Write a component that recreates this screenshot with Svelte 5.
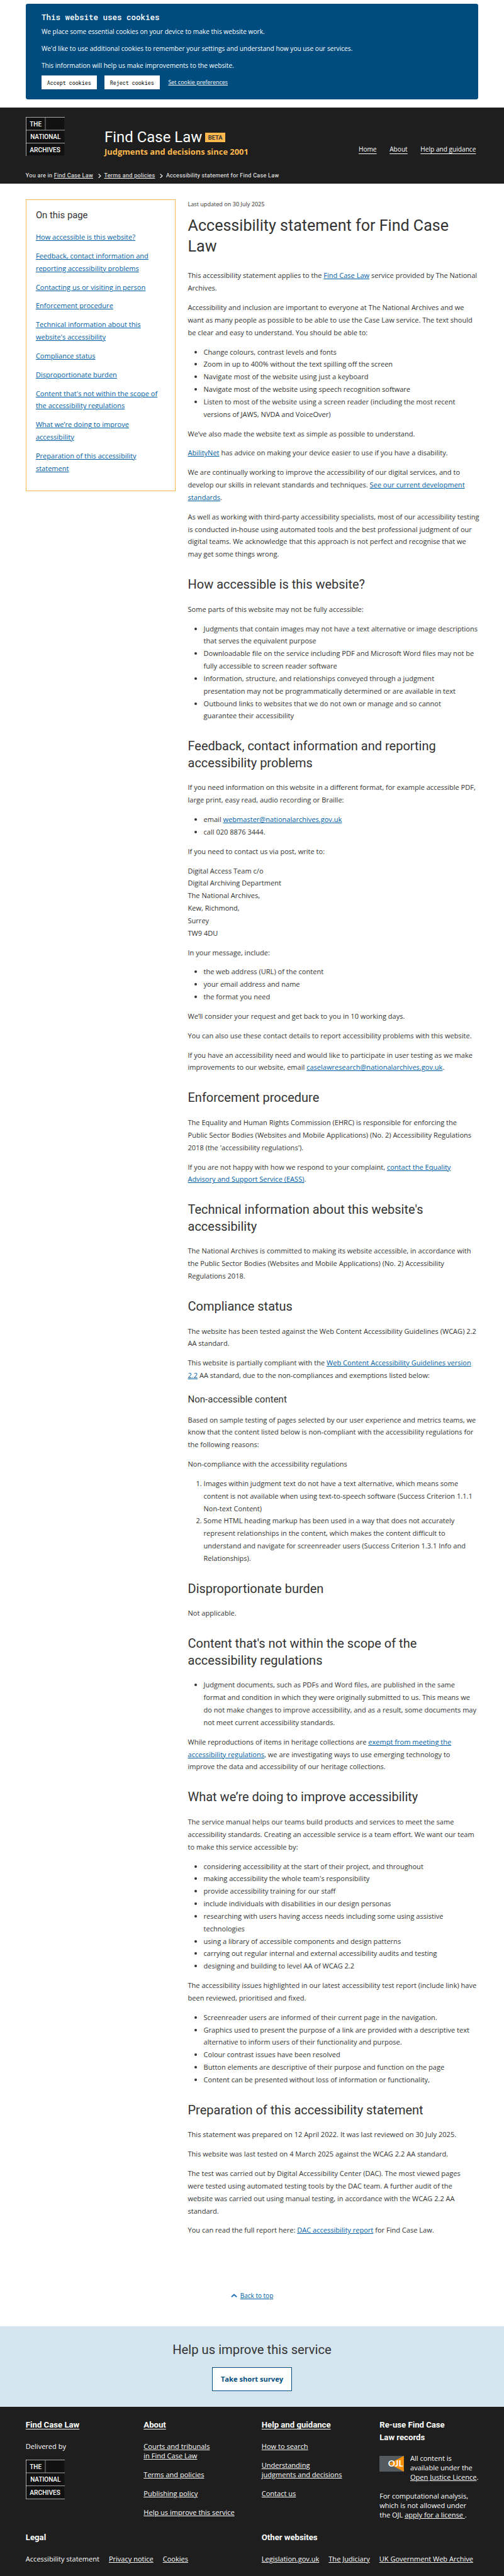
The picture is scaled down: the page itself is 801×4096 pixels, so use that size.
<script>
  const contents = [
    'How accessible is this website?',
    'Feedback, contact information and reporting accessibility problems',
    'Contacting us or visiting in person',
    'Enforcement procedure',
    "Technical information about this website's accessibility",
    'Compliance status',
    'Disproportionate burden',
    "Content that's not within the scope of the accessibility regulations",
    'What we’re doing to improve accessibility',
    'Preparation of this accessibility statement'
  ];
</script>

{#snippet logo()}
  <svg class="logo" viewBox="0 0 100 100" role="img" aria-label="The National Archives">
    <rect x="0.5" y="0.5" width="99" height="99" fill="#111" stroke="#fff" />
    <path d="M0 33.5H100M0 66.5H100" stroke="#fff" />
    <path d="M49.5 1V33" stroke="#999" stroke-width="1.4" />
    <text x="10" y="23.5" textLength="30" lengthAdjust="spacingAndGlyphs">THE</text>
    <text x="11.5" y="56.5" textLength="77" lengthAdjust="spacingAndGlyphs">NATIONAL</text>
    <text x="10" y="89.5" textLength="78" lengthAdjust="spacingAndGlyphs">ARCHIVES</text>
  </svg>
{/snippet}

{#snippet chevron()}
  <svg class="chevron" viewBox="0 0 8 12" aria-hidden="true"><path d="M1 1L6.3 6L1 11" fill="none" stroke="#fff" stroke-width="1.9" /></svg>
{/snippet}

<div class="page">
  <section class="cookies">
    <h2>This website uses cookies</h2>
    <p>We place some essential cookies on your device to make this website work.</p>
    <p>We'd like to use additional cookies to remember your settings and understand how you use our services.</p>
    <p>This information will help us make improvements to the website.</p>
    <div class="choices">
      <button>Accept cookies</button>
      <button>Reject cookies</button>
      <a href="#top">Set cookie preferences</a>
    </div>
  </section>

  <header>
    <div class="masthead">
      {@render logo()}
      <div class="brand">
        <div class="name"><span>Find Case Law</span><b>BETA</b></div>
        <div class="tagline">Judgments and decisions since 2001</div>
      </div>
      <nav>
        <a href="#top">Home</a>
        <a href="#top">About</a>
        <a href="#top">Help and guidance</a>
      </nav>
    </div>
    <div class="crumbs">
      <span>You are in <a href="#top">Find Case Law</a></span>
      {@render chevron()}
      <a href="#top">Terms and policies</a>
      {@render chevron()}
      <span>Accessibility statement for Find Case Law</span>
    </div>
  </header>

  <div class="body">
    <aside>
      <h2>On this page</h2>
      <ul>
        {#each contents as item}
          <li><a href="#top">{item}</a></li>
        {/each}
      </ul>
    </aside>

    <main>
      <p class="updated">Last updated on 30 July 2025</p>
      <h1>Accessibility statement for Find Case<br />Law</h1>
      <p>This accessibility statement applies to the <a href="#top">Find Case Law</a> service provided by The National<br />Archives.</p>
      <p>Accessibility and inclusion are important to everyone at The National Archives and we<br />want as many people as possible to be able to use the Case Law service. The text should<br />be clear and easy to understand. You should be able to:</p>
      <ul>
        <li>Change colours, contrast levels and fonts</li>
        <li>Zoom in up to 400% without the text spilling off the screen</li>
        <li>Navigate most of the website using just a keyboard</li>
        <li>Navigate most of the website using speech recognition software</li>
        <li>Listen to most of the website using a screen reader (including the most recent<br />versions of JAWS, NVDA and VoiceOver)</li>
      </ul>
      <p>We’ve also made the website text as simple as possible to understand.</p>
      <p><a href="#top">AbilityNet</a> has advice on making your device easier to use if you have a disability.</p>
      <p>We are continually working to improve the accessibility of our digital services, and to<br />develop our skills in relevant standards and techniques. <a href="#top">See our current development<br />standards</a>.</p>
      <p>As well as working with third-party accessibility specialists, most of our accessibility testing<br />is conducted in-house using automated tools and the best professional judgment of our<br />digital teams. We acknowledge that this approach is not perfect and recognise that we<br />may get some things wrong.</p>

      <h2>How accessible is this website?</h2>
      <p>Some parts of this website may not be fully accessible:</p>
      <ul>
        <li>Judgments that contain images may not have a text alternative or image descriptions<br />that serves the equivalent purpose</li>
        <li>Downloadable file on the service including PDF and Microsoft Word files may not be<br />fully accessible to screen reader software</li>
        <li>Information, structure, and relationships conveyed through a judgment<br />presentation may not be programmatically determined or are available in text</li>
        <li>Outbound links to websites that we do not own or manage and so cannot<br />guarantee their accessibility</li>
      </ul>

      <h2>Feedback, contact information and reporting<br />accessibility problems</h2>
      <p>If you need information on this website in a different format, for example accessible PDF,<br />large print, easy read, audio recording or Braille:</p>
      <ul>
        <li>email <a href="#top">webmaster@nationalarchives.gov.uk</a></li>
        <li>call 020 8876 3444.</li>
      </ul>
      <p>If you need to contact us via post, write to:</p>
      <p>Digital Access Team c/o<br />Digital Archiving Department<br />The National Archives,<br />Kew, Richmond,<br />Surrey<br />TW9 4DU</p>
      <p>In your message, include:</p>
      <ul>
        <li>the web address (URL) of the content</li>
        <li>your email address and name</li>
        <li>the format you need</li>
      </ul>
      <p>We’ll consider your request and get back to you in 10 working days.</p>
      <p>You can also use these contact details to report accessibility problems with this website.</p>
      <p>If you have an accessibility need and would like to participate in user testing as we make<br />improvements to our website, email <a href="#top">caselawresearch@nationalarchives.gov.uk</a>.</p>

      <h2>Enforcement procedure</h2>
      <p>The Equality and Human Rights Commission (EHRC) is responsible for enforcing the<br />Public Sector Bodies (Websites and Mobile Applications) (No. 2) Accessibility Regulations<br />2018 (the 'accessibility regulations').</p>
      <p>If you are not happy with how we respond to your complaint, <a href="#top">contact the Equality<br />Advisory and Support Service (EASS)</a>.</p>

      <h2>Technical information about this website's<br />accessibility</h2>
      <p>The National Archives is committed to making its website accessible, in accordance with<br />the Public Sector Bodies (Websites and Mobile Applications) (No. 2) Accessibility<br />Regulations 2018.</p>

      <h2>Compliance status</h2>
      <p>The website has been tested against the Web Content Accessibility Guidelines (WCAG) 2.2<br />AA standard.</p>
      <p>This website is partially compliant with the <a href="#top">Web Content Accessibility Guidelines version<br />2.2</a> AA standard, due to the non-compliances and exemptions listed below:</p>
      <h3>Non-accessible content</h3>
      <p>Based on sample testing of pages selected by our user experience and metrics teams, we<br />know that the content listed below is non-compliant with the accessibility regulations for<br />the following reasons:</p>
      <p>Non-compliance with the accessibility regulations</p>
      <ol>
        <li>Images within judgment text do not have a text alternative, which means some<br />content is not available when using text-to-speech software (Success Criterion 1.1.1<br />Non-text Content)</li>
        <li>Some HTML heading markup has been used in a way that does not accurately<br />represent relationships in the content, which makes the content difficult to<br />understand and navigate for screenreader users (Success Criterion 1.3.1 Info and<br />Relationships).</li>
      </ol>

      <h2>Disproportionate burden</h2>
      <p>Not applicable.</p>

      <h2>Content that's not within the scope of the<br />accessibility regulations</h2>
      <ul>
        <li>Judgment documents, such as PDFs and Word files, are published in the same<br />format and condition in which they were originally submitted to us. This means we<br />do not make changes to improve accessibility, and as a result, some documents may<br />not meet current accessibility standards.</li>
      </ul>
      <p>While reproductions of items in heritage collections are <a href="#top">exempt from meeting the<br />accessibility regulations</a>, we are investigating ways to use emerging technology to<br />improve the data and accessibility of our heritage collections.</p>

      <h2>What we’re doing to improve accessibility</h2>
      <p>The service manual helps our teams build products and services to meet the same<br />accessibility standards. Creating an accessible service is a team effort. We want our team<br />to make this service accessible by:</p>
      <ul>
        <li>considering accessibility at the start of their project, and throughout</li>
        <li>making accessibility the whole team's responsibility</li>
        <li>provide accessibility training for our staff</li>
        <li>include individuals with disabilities in our design personas</li>
        <li>researching with users having access needs including some using assistive<br />technologies</li>
        <li>using a library of accessible components and design patterns</li>
        <li>carrying out regular internal and external accessibility audits and testing</li>
        <li>designing and building to level AA of WCAG 2.2</li>
      </ul>
      <p>The accessibility issues highlighted in our latest accessibility test report (include link) have<br />been reviewed, prioritised and fixed.</p>
      <ul>
        <li>Screenreader users are informed of their current page in the navigation.</li>
        <li>Graphics used to present the purpose of a link are provided with a descriptive text<br />alternative to inform users of their functionality and purpose.</li>
        <li>Colour contrast issues have been resolved</li>
        <li>Button elements are descriptive of their purpose and function on the page</li>
        <li>Content can be presented without loss of information or functionality,</li>
      </ul>

      <h2>Preparation of this accessibility statement</h2>
      <p>This statement was prepared on 12 April 2022. It was last reviewed on 30 July 2025.</p>
      <p>This website was last tested on 4 March 2025 against the WCAG 2.2 AA standard.</p>
      <p>The test was carried out by Digital Accessibility Center (DAC). The most viewed pages<br />were tested using automated testing tools by the DAC team. A further audit of the<br />website was carried out using manual testing, in accordance with the WCAG 2.2 AA<br />standard.</p>
      <p>You can read the full report here: <a href="#top">DAC accessibility report</a> for Find Case Law.</p>
    </main>
  </div>

  <div class="back">
    <svg viewBox="0 0 16 10" aria-hidden="true"><path d="M1.5 8.5L8 2.5L14.5 8.5" fill="none" stroke="#1d70b8" stroke-width="3" /></svg>
    <a href="#top">Back to top</a>
  </div>

  <section class="survey">
    <h2>Help us improve this service</h2>
    <a href="#top">Take short survey</a>
  </section>

  <footer>
    <div class="cols">
      <div>
        <h3><a href="#top">Find Case Law</a></h3>
        <p class="delivered">Delivered by</p>
        {@render logo()}
      </div>
      <div>
        <h3><a href="#top">About</a></h3>
        <p><a href="#top">Courts and tribunals<br />in Find Case Law</a></p>
        <p><a href="#top">Terms and policies</a></p>
        <p><a href="#top">Publishing policy</a></p>
        <p><a href="#top">Help us improve this service</a></p>
      </div>
      <div>
        <h3><a href="#top">Help and guidance</a></h3>
        <p><a href="#top">How to search</a></p>
        <p><a href="#top">Understanding<br />judgments and decisions</a></p>
        <p><a href="#top">Contact us</a></p>
      </div>
      <div>
        <h3>Re-use Find Case<br />Law records</h3>
        <div class="licence">
          <svg viewBox="0 0 62 40" role="img" aria-label="OJL">
            <rect width="62" height="40" fill="#535b60" />
            <path d="M62 0V40L24 20Z" fill="#f78f08" />
            <text x="22" y="27" textLength="38" lengthAdjust="spacingAndGlyphs">OJL</text>
          </svg>
          <p>All content is<br />available under the<br /><a href="#top">Open Justice Licence</a>.</p>
        </div>
        <p>For computational analysis,<br />which is not allowed under<br />the OJL <a href="#top">apply for a license&nbsp;</a>.</p>
      </div>
    </div>
    <div class="extra">
      <div>
        <h3>Legal</h3>
        <div class="row"><span>Accessibility statement</span><a href="#top">Privacy notice</a><a href="#top">Cookies</a></div>
      </div>
      <div>
        <h3>Other websites</h3>
        <div class="row"><a href="#top">Legislation.gov.uk</a><a href="#top">The Judiciary</a><a href="#top">UK Government Web Archive</a></div>
      </div>
    </div>
  </footer>
</div>

<style>
  :global(html) { font-size: 6.259px; background: #fff; }
  :global(body) { margin: 0; }
  .page {
    width: 801px;
    height: 4096px;
    overflow: hidden;
    display: flex;
    flex-direction: column;
    font: 1.768rem/3.168rem 'Open Sans', sans-serif;
    color: #333;
  }
  h1, h2, h3, p, ul, ol { margin: 0; padding: 0; font-weight: 400; }
  a { text-underline-offset: 0.12em; text-decoration-thickness: 1px; }

  .cookies {
    box-sizing: border-box;
    height: 24.3rem;
    margin: 1rem 6.53rem 2rem;
    padding: 2.1rem 4rem 0;
    background: #004c7e;
    border-radius: 0.5rem;
    color: #fff;
    font-size: 1.625rem;
    flex: none;
  }
  .cookies h2 { font: 500 2rem/2.8rem 'Roboto Mono', 'Liberation Mono', monospace; margin-bottom: 0.6rem; }
  .cookies p { line-height: 2.88rem; margin-bottom: 1.49rem; }
  .cookies p:last-of-type { margin-bottom: 1.1rem; }
  .choices { display: flex; align-items: center; gap: 2rem; }
  .choices button {
    width: 14rem; height: 3.5rem; border: 0; padding: 0; background: #fff; color: #000;
    font: 1.333rem 'Roboto Mono', 'Liberation Mono', monospace;
  }
  .choices a { color: #fff; font-size: 1.43rem; margin-left: 0.2rem; }

  header { box-sizing: border-box; height: 19.3rem; background: #1e1e1e; color: #fff; padding: 2.4rem 6.53rem 0; flex: none; }
  .masthead { display: flex; height: 10rem; }
  .logo { width: 10rem; height: 10rem; display: block; flex: none; }
  .logo text { font: 500 18.5px Roboto, sans-serif; fill: #fff; }
  .brand { margin-left: 10rem; }
  .name { display: flex; align-items: center; margin-top: 3.1rem; height: 4.2rem; font: 3.825rem/4.2rem Roboto, sans-serif; }
  .name b { margin-left: 0.8rem; width: 5.1rem; height: 2.5rem; background: #ffb84d; color: #333; font: 700 1.5rem/2.5rem Roboto, sans-serif; text-align: center; }
  .tagline { color: #ffb84d; font-weight: 700; font-size: 2.062rem; line-height: 3rem; }
  nav { margin: 6.9rem 0.6rem 0 auto; display: flex; gap: 3.3rem; font-size: 1.62rem; line-height: 2.6rem; }
  nav a { text-underline-offset: 0.28em; }
  nav a, .crumbs a, footer a { color: #fff; }
  .crumbs { display: flex; align-items: center; margin-top: 3.7rem; font: 1.44rem/2.4rem Roboto, sans-serif; letter-spacing: 0.047rem; white-space: nowrap; }
  .chevron { width: 0.8rem; height: 1.2rem; margin: 0.2rem 0.8rem 0 1.2rem; }

  .body { display: flex; align-items: flex-start; padding: 4rem 6.53rem 0; gap: 3.17rem; flex: none; }
  aside { box-sizing: border-box; flex: none; width: 38rem; height: 74.2rem; border: 1px solid #ffb84d; padding: 2.2rem 2.4rem 0; }
  aside h2 { font: 2.37rem/3.6rem Roboto, sans-serif; margin-bottom: 2.1rem; }
  aside ul { list-style: none; }
  aside li { margin-bottom: 1.6rem; }
  aside a, main a { color: #005ea5; }
  main { flex: none; width: 73.9rem; white-space: nowrap; }
  main p, main ul, main ol { margin-bottom: 1.76rem; }
  main ul, main ol { padding-left: 4rem; }
  main .updated { font-size: 1.454rem; line-height: 2.6rem; margin: 0 0 1.5rem; }
  h1 { font: 4.01rem/5.28rem Roboto, sans-serif; margin-bottom: 3.2rem; }
  main h2 { font: 3.195rem/4.224rem Roboto, sans-serif; margin: 4rem 0 2.6rem; }
  main h3 { font: 2.4rem/3.2rem Roboto, sans-serif; margin: 2.9rem 0 2rem; }

  .back { display: flex; justify-content: center; align-items: center; height: 3rem; margin-top: 11.8rem; gap: 0.8rem; font-size: 1.6rem; flex: none; }
  .back svg { width: 1.6rem; height: 1rem; }
  .back a { color: #005ea5; }

  .survey { margin-top: auto; height: 20.5rem; background: #d4e5ef; display: flex; flex-direction: column; align-items: center; flex: none; }
  .survey h2 { font: 3.23rem/4.8rem Roboto, sans-serif; margin: 3.6rem 0 2.1rem; }
  .survey a { box-sizing: border-box; width: 20.3rem; height: 6rem; border: 0.2rem solid #004c7e; background: #fff; color: #004c7e; font-weight: 700; font-size: 1.78rem; line-height: 5.6rem; text-align: center; text-decoration: none; white-space: nowrap; }

  footer { box-sizing: border-box; height: 43rem; background: #1e1e1e; color: #fff; padding: 3.1rem 6.53rem 0; font-size: 1.765rem; line-height: 2.4rem; flex: none; }
  .cols { display: grid; grid-template-columns: 29.95rem 29.95rem 29.95rem 1fr; height: 28.6rem; white-space: nowrap; }
  footer h3 { font: 700 2.105rem/3.1rem Roboto, sans-serif; margin-bottom: 2.6rem; }
  footer p { margin-bottom: 2.4rem; }
  footer .delivered { margin-bottom: 2.3rem; }
  .licence { display: flex; gap: 1.6rem; }
  .licence svg { width: 6.2rem; height: 4rem; margin-top: 0.6rem; }
  .licence text { font: 700 20px Lato, sans-serif; fill: #fff; }
  .extra { display: grid; grid-template-columns: 59.9rem 1fr; white-space: nowrap; }
  .row { display: flex; gap: 2.4rem; }
</style>
